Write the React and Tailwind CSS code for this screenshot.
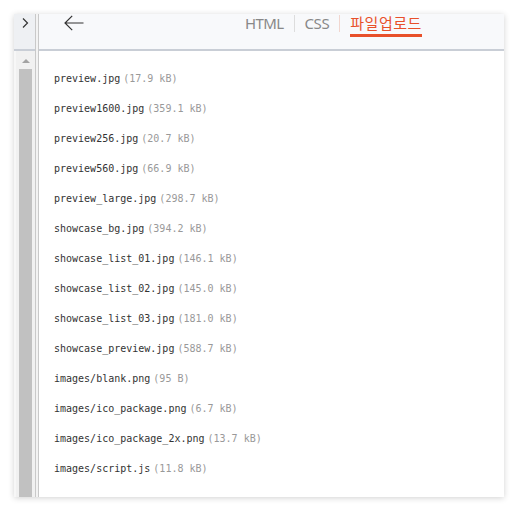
import React from "react";

const files = [
  ["preview.jpg", "17.9 kB"],
  ["preview1600.jpg", "359.1 kB"],
  ["preview256.jpg", "20.7 kB"],
  ["preview560.jpg", "66.9 kB"],
  ["preview_large.jpg", "298.7 kB"],
  ["showcase_bg.jpg", "394.2 kB"],
  ["showcase_list_01.jpg", "146.1 kB"],
  ["showcase_list_02.jpg", "145.0 kB"],
  ["showcase_list_03.jpg", "181.0 kB"],
  ["showcase_preview.jpg", "588.7 kB"],
  ["images/blank.png", "95 B"],
  ["images/ico_package.png", "6.7 kB"],
  ["images/ico_package_2x.png", "13.7 kB"],
  ["images/script.js", "11.8 kB"],
];

export default function App() {
  return (
    <div className="w-[519px] h-[513px] bg-white overflow-hidden relative">
      <div className="absolute left-[14px] top-[14px] w-[490px] h-[483px] bg-white shadow-[0_1px_6px_rgba(0,0,0,0.18)] flex overflow-hidden">
        {/* left scrollbar column */}
        <div className="w-[22px] flex flex-col border-r border-[#c9c9c9] bg-[#f7f7f7]">
          <div className="h-[37px] bg-[#eef0f3] border-b-2 border-[#c9ced6] flex justify-center pt-[3px]">
            <svg width="10" height="12" viewBox="0 0 10 12">
              <path d="M3 1.5 L7.5 6 L3 10.5" fill="none" stroke="#333" strokeWidth="1.2" />
            </svg>
          </div>
          <div className="flex-1 flex flex-col pl-[2px]">
            <div className="flex-1 bg-[#f1f1f1] flex flex-col items-center">
              <div className="h-[18px] flex items-center justify-center">
                <div className="w-0 h-0 border-l-[4px] border-r-[4px] border-b-[4px] border-l-transparent border-r-transparent border-b-[#a3a3a3] mt-[2px]" />
              </div>
              <div className="w-[13px] flex-1 bg-[#c1c1c1]" />
            </div>
          </div>
        </div>
        <div className="w-[2px] bg-[#f3f3f3]" />
        {/* content */}
        <div className="flex-1 flex flex-col border-l border-[#c9c9c9]">
          <div className="h-[37px] bg-[#f8f9fb] border-b-2 border-[#c9ced6] flex items-start relative">
            <svg className="absolute left-[25px] top-[1px]" width="20" height="16" viewBox="0 0 20 16">
              <path d="M1 8 H19.5 M8.2 0.8 L1 8 L8.2 15.2" fill="none" stroke="#333" strokeWidth="1.2" />
            </svg>
            <div
              className="absolute left-[206px] top-0 flex items-start text-[15px] leading-[18px]"
              style={{ fontFamily: '"Noto Sans", "Noto Sans CJK KR", sans-serif' }}
            >
              <span className="text-[#888] tracking-[-0.6px]">HTML</span>
              <span className="w-px h-[17px] bg-[#ddd] mx-[10px] mt-[1px]" />
              <span className="text-[#888] tracking-[-0.4px]">CSS</span>
              <span className="w-px h-[17px] bg-[#f1d6cf] mx-[10px] mt-[1px]" />
              <span className="text-[#e8502a] border-b-[3px] border-[#e8502a] pb-[2px] tracking-[0.5px]">파일업로드</span>
            </div>
          </div>
          <div
            className="pl-[15px] pt-[13px] text-[10px] leading-[30px]"
            style={{ fontFamily: '"DejaVu Sans Mono", "Liberation Mono", monospace' }}
          >
            {files.map(([n, s]) => (
              <div key={n} className="whitespace-nowrap">
                <span className="text-[#333]">{n}</span>
                <span className="text-[#999] ml-[3px]">({s})</span>
              </div>
            ))}
          </div>
        </div>
      </div>
    </div>
  );
}
